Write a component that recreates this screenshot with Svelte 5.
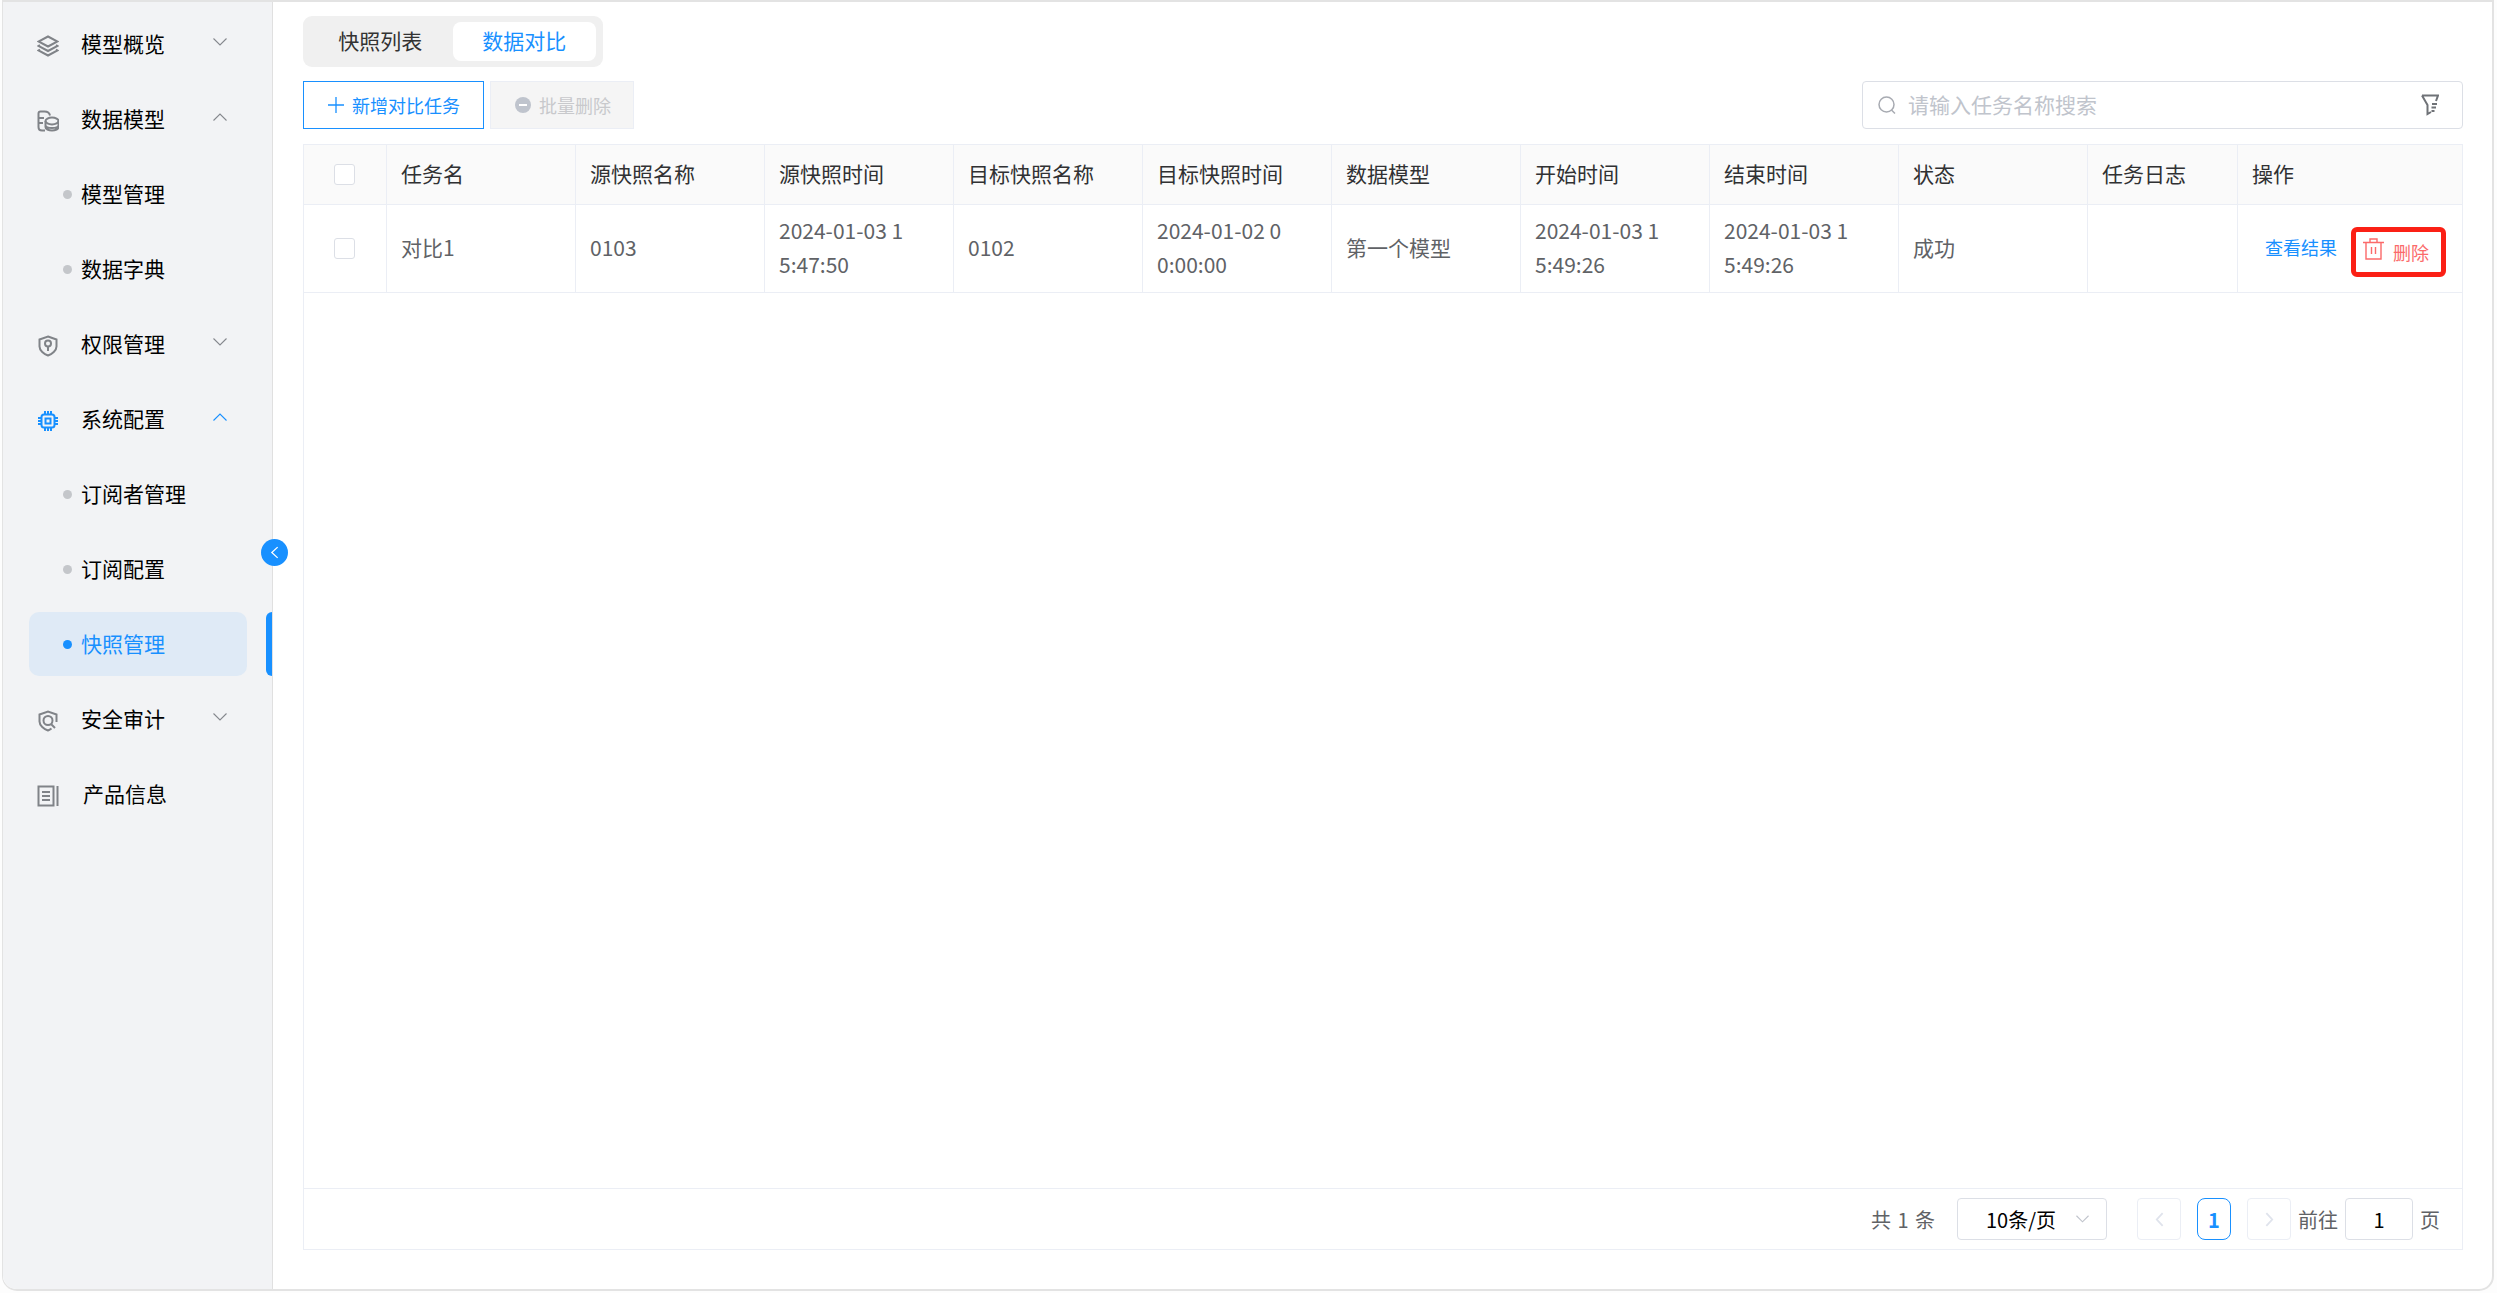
<script lang="ts">
  const menu = [
    { label: "模型概览", icon: "layers", arrow: "down" },
    { label: "数据模型", icon: "data", arrow: "up" },
    { label: "模型管理", sub: true },
    { label: "数据字典", sub: true },
    { label: "权限管理", icon: "key", arrow: "down" },
    { label: "系统配置", icon: "chip", arrow: "up", open: true },
    { label: "订阅者管理", sub: true },
    { label: "订阅配置", sub: true },
    { label: "快照管理", sub: true, active: true },
    { label: "安全审计", icon: "audit", arrow: "down" },
    { label: "产品信息", icon: "doc", wide: true },
  ];

  const heads = [
    "任务名", "源快照名称", "源快照时间", "目标快照名称", "目标快照时间",
    "数据模型", "开始时间", "结束时间", "状态", "任务日志", "操作",
  ];

  const row = [
    "对比1", "0103", "2024-01-03 15:47:50", "0102", "2024-01-02 00:00:00",
    "第一个模型", "2024-01-03 15:49:26", "2024-01-03 15:49:26", "成功", "",
  ];
</script>

<div class="shell">
  <aside class="sidebar">
    {#each menu as item}
      <div class="item" class:active={item.active} class:open={item.open}>
        {#if item.active}<span class="bar"></span>{/if}
        {#if item.sub}
          <span class="dot"></span>
        {:else}
          <svg class="icon" viewBox="0 0 22 22" fill="none" stroke="currentColor" stroke-width="2">
            {#if item.icon === "layers"}
              <path d="M11 1.500 20.500 6.500 11 11.500 1.500 6.500Z" />
              <path d="M3 10 1.500 11 11 16 20.500 11 19 10" />
              <path d="M3 14.500 1.500 15.500 11 20.500 20.500 15.500 19 14.500" />
            {:else if item.icon === "data"}
              <path d="M13 5.500C12.500 3 10 1.500 7.500 1.500H3.500C2.200 1.500 1.500 2.500 1.500 3.500V17C1.500 19 3 20.500 5 20.500H8" />
              <path d="M1.500 8H7M1.500 13H6" />
              <ellipse cx="15" cy="11" rx="6.500" ry="3.500" />
              <path d="M8.500 11V17C8.500 19 11.500 20.500 15 20.500S21.500 19 21.500 17V11M8.500 15C8.500 17 11.500 18 15 18S21.500 17 21.500 15" />
            {:else if item.icon === "key"}
              <path d="M11 1.500 19.500 4.500V11.500C19.500 15.500 15 19 11 20.500 7 19 2.500 15.500 2.500 11.500V4.500Z" />
              <circle cx="11" cy="8.500" r="3" />
              <path d="M11 11.500V16" />
            {:else if item.icon === "chip"}
              <rect x="4.500" y="4.500" width="13" height="13" rx="2.500" />
              <rect x="8.500" y="8.500" width="5" height="5" />
              <path d="M8 1V4.500M11 1V4.500M14 1V4.500M8 17.500V21M11 17.500V21M14 17.500V21M1 8H4.500M1 11H4.500M1 14H4.500M17.500 8H21M17.500 11H21M17.500 14H21" />
            {:else if item.icon === "audit"}
              <path d="M19.500 12V4.500L11 1.500 2.500 4.500V11.500C2.500 15.500 7 19 11 20.500 12.500 20 13.500 19.300 14.500 18.500" />
              <circle cx="11" cy="10.500" r="4.500" />
              <path d="M14 14 18 18" />
            {:else if item.icon === "doc"}
              <rect x="1.500" y="1.500" width="15" height="19" />
              <path d="M5 7H13M5 11H13M5 15H13M20.500 1V21" />
            {/if}
          </svg>
        {/if}
        <span class="label" class:wide={item.wide}>{item.label}</span>
        {#if item.arrow}
          <svg class="arrow" class:up={item.arrow === "up"} viewBox="0 0 14 8" fill="none" stroke="currentColor" stroke-width="1.100">
            <path d="M.5.5 7 7 13.500.5" />
          </svg>
        {/if}
      </div>
    {/each}
    <button class="collapse" aria-label="收起">
      <svg viewBox="0 0 10 14" width="9" height="13" fill="none" stroke="#fff" stroke-width="1.400">
        <path d="M8.500 1 2 7l6.500 6" />
      </svg>
    </button>
  </aside>

  <main class="main">
    <div class="tabs">
      <span class="tab">快照列表</span>
      <span class="tab current">数据对比</span>
    </div>

    <div class="toolbar">
      <button class="btn add">
        <svg viewBox="0 0 16 16" width="16" height="16" stroke="#1890ff" stroke-width="1.300"><path d="M8 0V16M0 8H16" /></svg>
        新增对比任务
      </button>
      <button class="btn batch">
        <svg viewBox="0 0 16 16" width="16" height="16"><circle cx="8" cy="8" r="8" fill="#bfc4cd" /><path d="M4 8H12" stroke="#fff" stroke-width="2" /></svg>
        批量删除
      </button>
      <div class="search">
        <svg viewBox="0 0 18 18" width="18" height="18" fill="none" stroke="#a8abb2" stroke-width="1.500">
          <circle cx="8.500" cy="8.500" r="7.500" /><path d="M13.500 14 17 17.500" />
        </svg>
        <span class="placeholder">请输入任务名称搜索</span>
        <svg class="filter" viewBox="0 0 18 22" width="18" height="22" fill="none" stroke="#6f7277" stroke-width="2">
          <path d="M1 1.500H17L15 7M1 1.500 6.500 11V20L10 18M11 10H16M10.500 13.500H15M10.500 17H13.500" />
        </svg>
      </div>
    </div>

    <section class="table">
      <div class="grid head">
        <div class="cell check"><span class="box"></span></div>
        {#each heads as h}
          <div class="cell">{h}</div>
        {/each}
      </div>
      <div class="grid body">
        <div class="cell check"><span class="box"></span></div>
        {#each row as c}
          <div class="cell"><span class="txt">{c}</span></div>
        {/each}
        <div class="cell actions">
          <a class="view" href="#top">查看结果</a>
          <a class="del" href="#top">
            <svg viewBox="0 0 21 22" width="21" height="22" fill="none" stroke="#fb6a6a" stroke-width="1.400">
              <path d="M0 4.500H21M7 4.500V1H14V4.500M3 4.500V21H18V4.500M8.500 9V16M12.500 9V16" />
            </svg>
            删除
          </a>
        </div>
      </div>
      <div class="spacer"></div>
      <footer class="pager">
        <span class="total">共 1 条</span>
        <div class="size">
          10条/页
          <svg viewBox="0 0 14 8" width="13" height="8" fill="none" stroke="#c0c4cc" stroke-width="1.200"><path d="M.5.5 7 7 13.500.5" /></svg>
        </div>
        <span class="nav">
          <svg viewBox="0 0 10 16" width="9" height="15" fill="none" stroke="#dfe3ec" stroke-width="2"><path d="M8.500 1 2 8l6.500 7" /></svg>
        </span>
        <span class="num">1</span>
        <span class="nav">
          <svg viewBox="0 0 10 16" width="9" height="15" fill="none" stroke="#dfe3ec" stroke-width="2"><path d="M1.500 1 8 8l-6.500 7" /></svg>
        </span>
        <span class="goto">前往</span>
        <span class="input">1</span>
        <span class="page">页</span>
      </footer>
    </section>
  </main>
</div>

<style>
  :global(body) {
    background: #fdfdfd;
    font-family: "Noto Sans CJK SC", "Noto Sans", sans-serif;
  }

  .shell {
    display: flex;
    box-sizing: border-box;
    width: 2492px;
    height: 1291px;
    margin-left: 2px;
    border: 1px solid #e3e3e3;
    border-top-width: 2px;
    border-bottom-width: 2px;
    border-right-width: 2px;
    border-radius: 0 0 15px 15px;
    background: #fff;
  }

  .sidebar {
    position: relative;
    flex: none;
    box-sizing: border-box;
    width: 270px;
    padding-top: 5px;
    background: #f2f3f5;
    border-right: 1px solid #e0e0e0;
    border-bottom-left-radius: 14px;
  }

  .item {
    position: relative;
    display: flex;
    align-items: center;
    height: 75px;
    color: #000;
    font-size: 21px;
  }

  .icon {
    flex: none;
    width: 22px;
    height: 22px;
    margin-left: 34px;
    margin-top: 2px;
    color: #808388;
  }

  .open .icon {
    color: #1890ff;
  }

  .label {
    margin-left: 22px;
    padding-bottom: 3px;
    white-space: nowrap;
  }

  .label.wide {
    margin-left: 24px;
  }

  .dot {
    flex: none;
    width: 9px;
    height: 9px;
    margin-left: 60px;
    margin-right: 9px;
    border-radius: 50%;
    background: #c4c6ca;
  }

  .dot + .label {
    margin-left: 0;
  }

  .arrow {
    position: absolute;
    left: 210px;
    top: 31px;
    width: 14px;
    height: 8px;
    color: #85888d;
  }

  .open .arrow {
    color: #1890ff;
  }

  .arrow.up {
    transform: rotate(180deg);
  }

  .active {
    color: #1890ff;
  }

  .active::before {
    content: "";
    position: absolute;
    left: 26px;
    top: 5px;
    width: 218px;
    height: 64px;
    border-radius: 10px;
    background: #dfeaf6;
  }

  .active .dot,
  .active .label {
    position: relative;
  }

  .active .dot {
    background: #1890ff;
  }

  .bar {
    position: absolute;
    right: 0;
    top: 5px;
    width: 6px;
    height: 64px;
    border-radius: 6px 0 0 6px;
    background: #1890ff;
  }

  .collapse {
    position: absolute;
    left: 258px;
    top: 537px;
    display: flex;
    align-items: center;
    justify-content: center;
    width: 27px;
    height: 27px;
    padding: 0;
    border: none;
    border-radius: 50%;
    background: #1890ff;
  }

  .main {
    flex: 1;
    display: flex;
    flex-direction: column;
    min-width: 0;
    padding: 14px 29px 39px 30px;
  }

  .tabs {
    display: flex;
    align-self: flex-start;
    box-sizing: border-box;
    width: 300px;
    height: 51px;
    padding: 6px 7px;
    border-radius: 9px;
    background: #f0f0f0;
    font-size: 21px;
    color: #333;
  }

  .tab {
    display: flex;
    align-items: center;
    justify-content: center;
    width: 142px;
    padding: 0 2px 3px 0;
    border-radius: 8px;
  }

  .tab.current {
    width: 145px;
    padding-right: 0;
    background: #fff;
    color: #1890ff;
  }

  .toolbar {
    display: flex;
    gap: 6px;
    height: 48px;
    margin-top: 14px;
  }

  .btn {
    display: flex;
    align-items: center;
    gap: 8px;
    box-sizing: border-box;
    height: 48px;
    padding: 0 0 0 24px;
    background: #fff;
    font-family: inherit;
    font-size: 18px;
  }

  .add {
    width: 181px;
    border: 1.500px solid #1890ff;
    color: #1890ff;
  }

  .batch {
    width: 144px;
    border: 1.500px solid #ebeef5;
    background: #f5f5f5;
    color: #c8c9cc;
  }

  .search {
    display: flex;
    align-items: center;
    box-sizing: border-box;
    width: 601px;
    height: 48px;
    margin-left: auto;
    padding: 0 23px 0 15px;
    border: 1.500px solid #dcdfe6;
    border-radius: 4px;
    font-size: 21px;
  }

  .placeholder {
    margin-left: 12px;
    padding-bottom: 2px;
    color: #c0c4cc;
  }

  .filter {
    margin-left: auto;
  }

  .table {
    flex: 1;
    display: flex;
    flex-direction: column;
    box-sizing: border-box;
    margin-top: 15px;
    border: 1.500px solid #ebeef5;
    font-size: 21px;
  }

  .grid {
    display: grid;
    box-sizing: border-box;
    grid-template-columns: 83px repeat(9, 189px) 150px 1fr;
    border-bottom: 1.500px solid #ebeef5;
  }

  .cell {
    display: flex;
    align-items: center;
    box-sizing: border-box;
    min-width: 0;
    padding: 0 15px 3px 14px;
    border-right: 1px solid #ebeef5;
    white-space: nowrap;
  }

  .cell:last-child {
    border-right: none;
  }

  .head {
    height: 60px;
    background: #fafafa;
    color: #303133;
  }

  .body {
    height: 88px;
    color: #606266;
  }

  .txt {
    width: 130px;
    line-height: 34px;
    white-space: normal;
    word-break: break-all;
  }

  .check {
    justify-content: center;
    padding: 0 2px 0 0;
  }

  .box {
    box-sizing: border-box;
    width: 21px;
    height: 21px;
    border: 1.500px solid #dcdfe6;
    border-radius: 3px;
    background: #fff;
  }

  .actions {
    padding: 0 0 0 27px;
    font-size: 18px;
  }

  .view {
    margin-bottom: 4px;
    color: #1890ff;
    text-decoration: none;
  }

  .del {
    display: flex;
    align-items: center;
    gap: 9px;
    box-sizing: border-box;
    width: 95px;
    height: 50px;
    margin: 6px 0 0 14px;
    padding-left: 7px;
    border: 5px solid #fb2015;
    border-radius: 6px;
    color: #fb6a6a;
    text-decoration: none;
  }

  .del svg {
    margin-top: -6px;
  }

  .spacer {
    flex: 1;
  }

  .pager {
    display: flex;
    align-items: center;
    justify-content: flex-end;
    height: 60px;
    padding-right: 22px;
    border-top: 1.500px solid #ebeef5;
    color: #606266;
    font-size: 20px;
  }

  .total {
    margin-right: 22px;
    word-spacing: 2px;
  }

  .size {
    position: relative;
    display: flex;
    align-items: center;
    box-sizing: border-box;
    width: 150px;
    height: 42px;
    padding-left: 28px;
    border: 1.500px solid #dcdfe6;
    border-radius: 4px;
    color: #000;
  }

  .size svg {
    position: absolute;
    right: 17px;
    top: 16px;
  }

  .nav {
    display: flex;
    align-items: center;
    justify-content: center;
    box-sizing: border-box;
    width: 44px;
    height: 42px;
    border: 1.500px solid #ebeef5;
    border-radius: 4px;
  }

  .size + .nav {
    margin-left: 30px;
  }

  .num {
    display: flex;
    align-items: center;
    justify-content: center;
    box-sizing: border-box;
    width: 34px;
    height: 42px;
    margin: 0 16px;
    border: 1.500px solid #1890ff;
    border-radius: 8px;
    color: #1890ff;
    font-weight: 700;
  }

  .goto {
    margin-left: 7px;
  }

  .input {
    display: flex;
    align-items: center;
    justify-content: center;
    box-sizing: border-box;
    width: 68px;
    height: 42px;
    margin: 0 7px;
    border: 1.500px solid #dcdfe6;
    border-radius: 4px;
    color: #000;
  }
</style>
